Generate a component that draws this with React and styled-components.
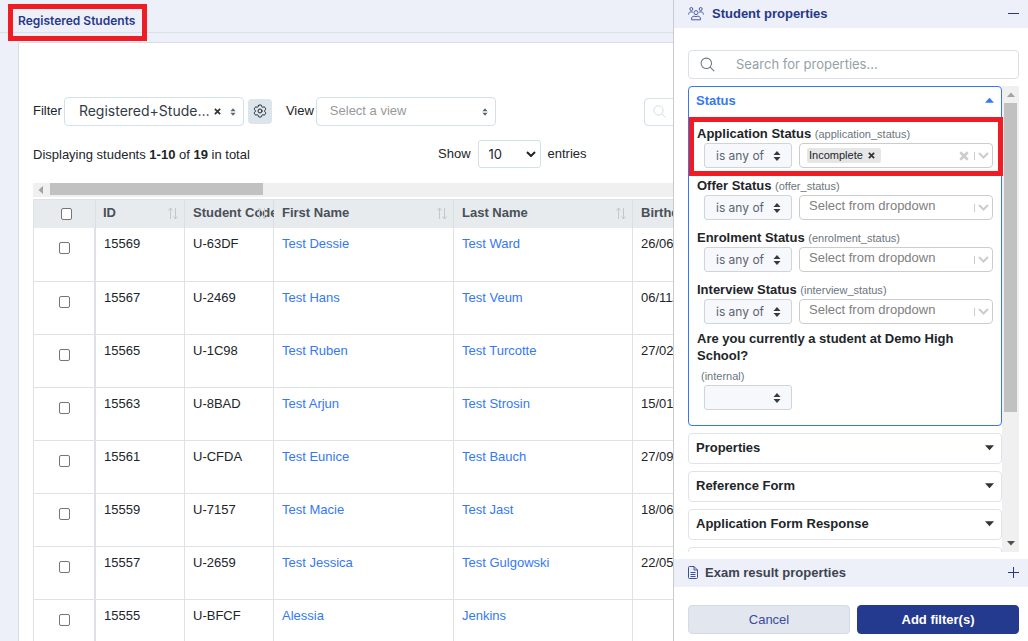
import React, { useState } from 'react';
import styled, { createGlobalStyle, css } from 'styled-components';
import { IoSearchOutline } from 'react-icons/io5';
import { HiOutlineCog6Tooth } from 'react-icons/hi2';

const students = [
  { id: '15569', code: 'U-63DF', first: 'Test Dessie', last: 'Test Ward', birth: '26/06/2008' },
  { id: '15567', code: 'U-2469', first: 'Test Hans', last: 'Test Veum', birth: '06/11/2009' },
  { id: '15565', code: 'U-1C98', first: 'Test Ruben', last: 'Test Turcotte', birth: '27/02/2008' },
  { id: '15563', code: 'U-8BAD', first: 'Test Arjun', last: 'Test Strosin', birth: '15/01/2007' },
  { id: '15561', code: 'U-CFDA', first: 'Test Eunice', last: 'Test Bauch', birth: '27/09/2008' },
  { id: '15559', code: 'U-7157', first: 'Test Macie', last: 'Test Jast', birth: '18/06/2009' },
  { id: '15557', code: 'U-2659', first: 'Test Jessica', last: 'Test Gulgowski', birth: '22/05/2008' },
  { id: '15555', code: 'U-BFCF', first: 'Alessia', last: 'Jenkins', birth: '' },
];

const columns = [
  { title: 'ID', width: 89 },
  { title: 'Student Code', width: 89 },
  { title: 'First Name', width: 180 },
  { title: 'Last Name', width: 179 },
  { title: 'Birthday', width: 179 },
];

const emptyFields = [
  { name: 'offer_status', label: 'Offer Status' },
  { name: 'enrolment_status', label: 'Enrolment Status' },
  { name: 'interview_status', label: 'Interview Status' },
];

const closedGroups = ['Properties', 'Reference Form', 'Application Form Response', 'Documents'];

function UsersIcon() {
  return (
    <svg width="16" height="14" viewBox="0 0 16 14" fill="none" stroke="#4a5aa3" strokeWidth="1">
      <circle cx="3.3" cy="2" r="1.5" />
      <circle cx="12.7" cy="2" r="1.5" />
      <circle cx="8" cy="5.6" r="2" />
      <path d="M0.6 7.5C0.6 5.7 1.6 4.8 3.2 4.8c.8 0 1.300.2 1.800.6" />
      <path d="M15.400 7.500c0-1.800-1-2.700-2.600-2.700-.8 0-1.300.2-1.800.6" />
      <path d="M3.500 12.800v-.7c0-1.800 1-2.900 2.700-2.900.6 0 1 .5 1.800.5s1.200-.5 1.800-.5c1.700 0 2.700 1.100 2.700 2.900v.7z" />
    </svg>
  );
}

function FileIcon() {
  return (
    <svg width="10" height="13" viewBox="0 0 10 13" fill="none" stroke="#3d4f9f">
      <path d="M1.500 0.500h4.500l3.500 3.500v7.500a1 1 0 0 1-1 1h-7a1 1 0 0 1-1-1v-10a1 1 0 0 1 1-1z" />
      <path d="M6 0.500V4h3.500M2.500 6.500h5M2.500 8.500h5M2.500 10.500h5" />
    </svg>
  );
}

function SortIcon() {
  return (
    <SortSvg width="10" height="13" viewBox="0 0 10 13" fill="none" stroke="#c3c8cd">
      <path d="M2.500 12V1M0.500 3.500l2-2.500 2 2.500" />
      <path d="M7.500 1v11M5.500 9.500l2 2.500 2-2.500" />
    </SortSvg>
  );
}

function Updown({ size = 8 }) {
  return (
    <svg width={size} height={size + 2} viewBox="0 0 8 10" fill="currentColor">
      <path d="M4 0l3.500 4h-7zM4 10l3.500-4h-7z" />
    </svg>
  );
}

function Chevron() {
  return (
    <svg width="11" height="7" viewBox="0 0 11 7" fill="none" stroke="#cccccc" strokeWidth="2">
      <path d="M1 1l4.500 4.500L10 1" />
    </svg>
  );
}

function Cross({ size = 7, color = '#333333' }) {
  return (
    <svg width={size} height={size} viewBox="0 0 8 8" stroke={color} strokeWidth="2">
      <path d="M1 1l6 6M7 1L1 7" />
    </svg>
  );
}

function Triangle({ direction = 'down', size = 9, color = '#333333' }) {
  const paths = {
    down: 'M0 2h8L4 6.500z',
    up: 'M0 6h8L4 1.500z',
    left: 'M6 0v8L1.500 4z',
  };
  return (
    <svg width={size} height={size} viewBox="0 0 8 8" fill={color}>
      <path d={paths[direction]} />
    </svg>
  );
}

export default function App() {
  const [keyword, setKeyword] = useState('');
  const [hasStatus, setHasStatus] = useState(true);

  return (
    <>
      <GlobalStyle />
      <Page>
        <Main>
          <TopBar>
            <PageTitle>Registered Students</PageTitle>
          </TopBar>
          <Card>
            <Toolbar>
              <ToolLabel htmlFor="filter">Filter</ToolLabel>
              <SelectBox>
                <BigSelect id="filter" $brand>
                  <option>Registered+Stude…</option>
                </BigSelect>
                <BoxTools>
                  <IconButton aria-label="Clear filter"><Cross /></IconButton>
                  <Updown size={6} />
                </BoxTools>
              </SelectBox>
              <GearButton aria-label="Filter settings"><HiOutlineCog6Tooth /></GearButton>
              <ToolLabel htmlFor="view" $spaced>View</ToolLabel>
              <SelectBox>
                <BigSelect id="view">
                  <option>Select a view</option>
                </BigSelect>
                <BoxTools><Updown size={6} /></BoxTools>
              </SelectBox>
              <TableSearch>
                <IoSearchOutline />
                <input type="text" aria-label="Search students" />
              </TableSearch>
            </Toolbar>

            <Summary>
              <Info>Displaying students <b>1-10</b> of <b>19</b> in total</Info>
              <label htmlFor="entries">Show</label>
              <EntriesBox>
                <EntriesSelect id="entries">
                  <option>10</option>
                  <option>25</option>
                  <option>50</option>
                </EntriesSelect>
                <svg width="10" height="6" viewBox="0 0 10 6" fill="none" stroke="#222222" strokeWidth="2">
                  <path d="M1 1l4 4 4-4" />
                </svg>
              </EntriesBox>
              <span>entries</span>
            </Summary>

            <HorizontalBar>
              <Triangle direction="left" size={8} color="#a3a3a3" />
              <HorizontalThumb />
            </HorizontalBar>

            <Table>
              <colgroup>
                <Col $width={62} />
                {columns.map((column) => (
                  <Col key={column.title} $width={column.width} />
                ))}
              </colgroup>
              <thead>
                <tr>
                  <HeadCell $check><CheckBox type="checkbox" aria-label="Select all" /></HeadCell>
                  {columns.map((column) => (
                    <HeadCell key={column.title}>{column.title}<SortIcon /></HeadCell>
                  ))}
                </tr>
              </thead>
              <tbody>
                {students.map((student) => (
                  <tr key={student.id}>
                    <Cell $check><CheckBox type="checkbox" aria-label={`Select ${student.id}`} /></Cell>
                    <Cell>{student.id}</Cell>
                    <Cell>{student.code}</Cell>
                    <Cell><StudentLink href="#">{student.first}</StudentLink></Cell>
                    <Cell><StudentLink href="#">{student.last}</StudentLink></Cell>
                    <Cell>{student.birth}</Cell>
                  </tr>
                ))}
              </tbody>
            </Table>
          </Card>
        </Main>

        <Drawer>
          <SectionBar $active>
            <UsersIcon />
            <h2>Student properties</h2>
            <IconButton aria-label="Collapse">
              <svg width="11" height="11" viewBox="0 0 11 11" stroke="#27388a"><path d="M0 5.500h11" /></svg>
            </IconButton>
          </SectionBar>

          <SearchBox>
            <IoSearchOutline />
            <input
              type="text"
              aria-label="Search for properties"
              placeholder="Search for properties..."
              value={keyword}
              onChange={(e) => setKeyword(e.target.value)}
            />
          </SearchBox>

          <ScrollArea>
            <Groups>
              <OpenGroup>
                <GroupButton $open>Status<Triangle direction="up" color="#3478f6" /></GroupButton>
                <Field $marked>
                  <FieldLabel htmlFor="application_status">
                    Application Status <small>(application_status)</small>
                  </FieldLabel>
                  <FieldRow>
                    <Operator>
                      <select aria-label="Application Status operator"><option>is any of</option></select>
                      <Updown />
                    </Operator>
                    <ValueBox>
                      {hasStatus && (
                        <Tag>
                          Incomplete
                          <IconButton aria-label="Remove Incomplete" onClick={() => setHasStatus(false)}>
                            <Cross />
                          </IconButton>
                        </Tag>
                      )}
                      <input id="application_status" type="text" />
                      <ValueTools>
                        <IconButton aria-label="Clear all" onClick={() => setHasStatus(false)}>
                          <Cross size={10} color="#cccccc" />
                        </IconButton>
                        <Divider />
                        <Chevron />
                      </ValueTools>
                    </ValueBox>
                  </FieldRow>
                </Field>
                {emptyFields.map((field) => (
                  <Field key={field.name}>
                    <FieldLabel htmlFor={field.name}>
                      {field.label} <small>({field.name})</small>
                    </FieldLabel>
                    <FieldRow>
                      <Operator>
                        <select aria-label={`${field.label} operator`}><option>is any of</option></select>
                        <Updown />
                      </Operator>
                      <ValueBox>
                        <select id={field.name}><option>Select from dropdown</option></select>
                        <ValueTools><Divider /><Chevron /></ValueTools>
                      </ValueBox>
                    </FieldRow>
                  </Field>
                ))}
                <LastField>
                  <FieldLabel htmlFor="internal">
                    Are you currently a student at Demo High School?
                  </FieldLabel>
                  <FieldNote>(internal)</FieldNote>
                  <FieldRow>
                    <Operator>
                      <select id="internal"><option></option></select>
                      <Updown />
                    </Operator>
                  </FieldRow>
                </LastField>
              </OpenGroup>
              {closedGroups.map((group) => (
                <ClosedGroup key={group}>
                  <GroupButton>{group}<Triangle /></GroupButton>
                </ClosedGroup>
              ))}
            </Groups>
            <VerticalBar>
              <Triangle direction="up" size={8} color="#a3a3a3" />
              <VerticalThumb />
              <Triangle size={8} color="#505050" />
            </VerticalBar>
          </ScrollArea>

          <SectionBar>
            <FileIcon />
            <h2>Exam result properties</h2>
            <IconButton aria-label="Expand">
              <svg width="11" height="11" viewBox="0 0 11 11" stroke="#27388a"><path d="M0 5.500h11M5.500 0v11" /></svg>
            </IconButton>
          </SectionBar>

          <Actions>
            <ActionButton type="button">Cancel</ActionButton>
            <ActionButton type="submit" $primary>Add filter(s)</ActionButton>
          </Actions>
        </Drawer>
      </Page>
    </>
  );
}

const brandFont = "Inter, 'Open Sans', sans-serif";
const textFont = "'Liberation Sans', Arial, sans-serif";

const GlobalStyle = createGlobalStyle`
  * {
    box-sizing: border-box;
  }

  body {
    margin: 0;
    background: #ffffff;
    color: #212529;
    font-family: ${textFont};
    font-size: 13px;
    line-height: 17px;
  }

  button, input, select {
    font: inherit;
    color: inherit;
  }

  svg {
    flex: none;
  }
`;

const highlight = css`
  &::after {
    content: '';
    position: absolute;
    border: 5px solid #ef1c24;
    pointer-events: none;
  }
`;

const Page = styled.div`
  display: flex;
  height: 100vh;
  overflow: hidden;
`;

const Main = styled.main`
  flex: 1;
  min-width: 0;
  overflow: hidden;
  background: #edf0f9;
`;

const TopBar = styled.header`
  display: flex;
  align-items: flex-start;
  height: 33px;
  padding: 12px 18px 0;
  border-bottom: 1px solid #dcdfe8;
`;

const PageTitle = styled.h1`
  position: relative;
  margin: 0;
  color: #27388a;
  font-family: ${brandFont};
  font-size: 12px;
  font-weight: 600;
  line-height: 17px;
  ${highlight}

  &::after {
    inset: -8px -12px -12px -10px;
  }
`;

const Card = styled.section`
  min-width: 1000px;
  margin: 9px 0 0 18px;
  padding: 54px 14px 0;
  border: 1px solid #d5dfe3;
  background: #ffffff;
`;

const Toolbar = styled.div`
  display: flex;
  align-items: center;
  gap: 4px;
`;

const ToolLabel = styled.label`
  margin-right: -2px;
  padding-bottom: 2px;
  ${({ $spaced }) => $spaced && css`
    margin-left: 10px;
  `}
`;

const SelectBox = styled.div`
  position: relative;
  width: 180px;
`;

const BigSelect = styled.select`
  appearance: none;
  display: block;
  width: 100%;
  height: 29px;
  padding: 0 30px 2px 13px;
  border: 1px solid #d3e0e6;
  border-radius: 4px;
  background: #ffffff;
  color: #999999;
  ${({ $brand }) => $brand && css`
    padding-left: 14px;
    color: #333b44;
    font-family: ${brandFont};
    font-size: 14px;
  `}
`;

const BoxTools = styled.div`
  position: absolute;
  top: 0;
  right: 8px;
  bottom: 0;
  display: flex;
  align-items: center;
  gap: 9px;
  color: #5c6670;
`;

const IconButton = styled.button`
  display: flex;
  align-items: center;
  padding: 0;
  border: 0;
  background: none;
  cursor: pointer;
`;

const GearButton = styled.button`
  display: flex;
  align-items: center;
  justify-content: center;
  width: 24px;
  height: 25px;
  padding: 0 0 2px;
  border: 0;
  border-radius: 4px;
  background: #dce4ec;

  svg {
    width: 16px;
    height: 16px;
  }
`;

const TableSearch = styled.div`
  display: flex;
  align-items: center;
  width: 200px;
  height: 28px;
  margin-left: 144px;
  padding-left: 7px;
  border: 1px solid #d3e0e6;
  border-radius: 4px;

  svg {
    width: 15px;
    height: 15px;
    color: #cfdae0;
  }

  input {
    flex: 1;
    min-width: 0;
    border: 0;
    outline: none;
  }
`;

const Summary = styled.div`
  display: flex;
  align-items: center;
  gap: 7px;
  margin-top: 14px;

  label,
  span {
    padding-bottom: 2px;
  }
`;

const Info = styled.p`
  width: 398px;
  margin: 0;

  b {
    font-weight: 600;
  }
`;

const EntriesBox = styled.div`
  position: relative;
  width: 63px;

  svg {
    position: absolute;
    top: 11px;
    right: 5px;
  }
`;

const EntriesSelect = styled.select`
  appearance: none;
  display: block;
  width: 100%;
  height: 28px;
  padding: 0 10px;
  border: 1px solid #d3e0e6;
  border-radius: 3px;
  background: #ffffff;
  font-family: ${brandFont};
`;

const HorizontalBar = styled.div`
  display: flex;
  align-items: center;
  gap: 5px;
  height: 14px;
  margin-top: 15px;
  padding-left: 4px;
  background: #f0f0f0;
`;

const HorizontalThumb = styled.div`
  width: 213px;
  height: 12px;
  margin-bottom: 2px;
  background: #c1c1c1;
`;

const Table = styled.table`
  table-layout: fixed;
  width: 779px;
  margin-top: 2px;
  border-collapse: separate;
  border-spacing: 0;
  border-left: 1px solid #dee2e6;
`;

const Col = styled.col`
  width: ${({ $width }) => $width}px;
`;

const HeadCell = styled.th`
  position: relative;
  height: 29px;
  padding: 0 0 3px 8px;
  border-top: 1px solid #dee2e6;
  border-right: 1px solid #d9dfe3;
  background: #e7ebee;
  color: #495057;
  font-weight: 600;
  text-align: left;
  white-space: nowrap;
  ${({ $check }) => $check && css`
    padding: 0 0 3px 3px;
    text-align: center;

    & + th {
      padding-left: 7px;
    }
  `}
`;

const SortSvg = styled.svg`
  position: absolute;
  top: 7px;
  right: 6px;
`;

const Cell = styled.td`
  height: 53px;
  padding: 7px 0 0 8px;
  border-right: 1px solid #dee2e6;
  border-bottom: 1px solid #dee2e6;
  vertical-align: top;
  ${({ $check }) => $check && css`
    padding: 14px 0 0;
    border-right-width: 2px;
    text-align: center;
  `}

  tr:first-child > & {
    height: 54px;
  }
`;

const CheckBox = styled.input`
  appearance: none;
  width: 11px;
  height: 12px;
  margin: 0;
  border: 1px solid #767676;
  border-radius: 2px;
  background: #ffffff;
  vertical-align: top;

  &:checked {
    background: #3478f6;
  }

  th & {
    vertical-align: middle;
  }
`;

const StudentLink = styled.a`
  color: #3478f6;
  text-decoration: none;
`;

const Drawer = styled.aside`
  display: flex;
  flex: none;
  flex-direction: column;
  width: 355px;
  border-left: 1px solid #c9cbd0;
  background: #ffffff;
`;

const SectionBar = styled.header`
  display: flex;
  align-items: center;
  flex: none;
  gap: ${({ $active }) => ($active ? '8px' : '7px')};
  height: 28px;
  padding: 0 9px 1px 14px;
  background: #edf0f9;
  color: ${({ $active }) => ($active ? '#27388a' : '#3d4350')};

  h2 {
    flex: 1;
    margin: 0;
    font-size: 13px;
    font-weight: 600;
  }
`;

const SearchBox = styled.div`
  display: flex;
  align-items: center;
  flex: none;
  gap: 20px;
  height: 29px;
  margin: 22px 9px 7px 14px;
  padding: 0 10px;
  border: 1px solid #dcdfe6;
  border-radius: 4px;

  svg {
    width: 17px;
    height: 17px;
    color: #6c7a80;
  }

  input {
    flex: 1;
    min-width: 0;
    padding: 0 0 1px;
    border: 0;
    outline: none;
    font-family: ${brandFont};
  }

  input::placeholder {
    color: #95a1a6;
  }
`;

const ScrollArea = styled.div`
  display: flex;
  flex: 1;
  min-height: 0;
  margin: 0 9px 7px 14px;
  overflow: hidden;
`;

const Groups = styled.div`
  display: flex;
  flex: 1;
  flex-direction: column;
  gap: 7px;
  min-width: 0;
`;

const OpenGroup = styled.section`
  flex: none;
  border: 1px solid #3478f6;
  border-radius: 4px;
`;

const ClosedGroup = styled.section`
  flex: none;
  border: 1px solid #e1e3ec;
  border-radius: 4px;
`;

const GroupButton = styled.button`
  display: flex;
  align-items: center;
  justify-content: space-between;
  width: 100%;
  height: 29px;
  padding: 0 7px 2px;
  border: 0;
  background: none;
  font-weight: 600;
  ${({ $open }) => $open && css`
    height: 35px;
    padding-bottom: 8px;
    color: #3478f6;
  `}
`;

const Field = styled.div`
  position: relative;
  padding: 3px 8px 6px;
  ${({ $marked }) => $marked && css`
    ${highlight}

    &::after {
      inset: -5px -2px -2px 0;
    }
  `}
`;

const LastField = styled.div`
  padding: 0 8px 15px;
`;

const FieldLabel = styled.label`
  display: block;
  margin-bottom: 1px;
  font-weight: 600;

  small {
    color: #6c757d;
    font-size: 11px;
    font-weight: 400;
    line-height: 11px;
  }
`;

const FieldNote = styled.p`
  margin: 4px 4px 0;
  color: #6c757d;
  font-size: 11px;
`;

const FieldRow = styled.div`
  display: flex;
  gap: 7px;
  padding-left: 7px;
`;

const Operator = styled.div`
  position: relative;
  flex: none;
  width: 88px;

  select {
    appearance: none;
    display: block;
    width: 100%;
    height: 25px;
    padding: 0 20px 1px 11px;
    border: 1px solid #ced4da;
    border-radius: 3px;
    background: #f7f8fc;
    color: #5b6470;
    font-family: ${brandFont};
    font-size: 12px;
  }

  svg {
    position: absolute;
    top: 8px;
    right: 11px;
    color: #343a40;
  }
`;

const ValueBox = styled.div`
  position: relative;
  display: flex;
  align-items: center;
  flex: 1;
  min-width: 0;
  height: 25px;
  padding-left: 7px;
  border: 1px solid #cccccc;
  border-radius: 4px;

  input {
    flex: 1;
    min-width: 0;
    border: 0;
    outline: none;
    background: none;
  }

  select {
    appearance: none;
    flex: 1;
    min-width: 0;
    padding: 0 0 4px 2px;
    border: 0;
    outline: none;
    background: none;
    color: #808080;
  }
`;

const ValueTools = styled.div`
  display: flex;
  align-items: center;
  gap: 3px;
  padding-right: 3px;
`;

const Divider = styled.span`
  width: 1px;
  height: 8px;
  margin-left: 2px;
  background: #cccccc;
`;

const Tag = styled.span`
  display: flex;
  align-items: center;
  flex: none;
  gap: 5px;
  height: 15px;
  padding: 0 6px 0 2px;
  border-radius: 2px;
  background: #e6e6e6;
  font-size: 11px;
`;

const VerticalBar = styled.div`
  display: flex;
  align-items: center;
  flex: none;
  flex-direction: column;
  width: 17px;
  padding: 5px 0;
  background: #f0f0f0;
`;

const VerticalThumb = styled.div`
  width: 13px;
  height: 309px;
  margin: 4px 0 auto;
  background: #c1c1c1;
`;

const Actions = styled.div`
  display: flex;
  flex: none;
  gap: 7px;
  padding: 18px 9px 7px 14px;
`;

const ActionButton = styled.button`
  flex: 1;
  height: 29px;
  border: 1px solid #d5dae4;
  border-radius: 4px;
  background: #e2e6ee;
  color: #3c4c98;
  ${({ $primary }) => $primary && css`
    border-color: #243a8f;
    background: #243a8f;
    color: #ffffff;
    font-weight: 600;
  `}
`;
